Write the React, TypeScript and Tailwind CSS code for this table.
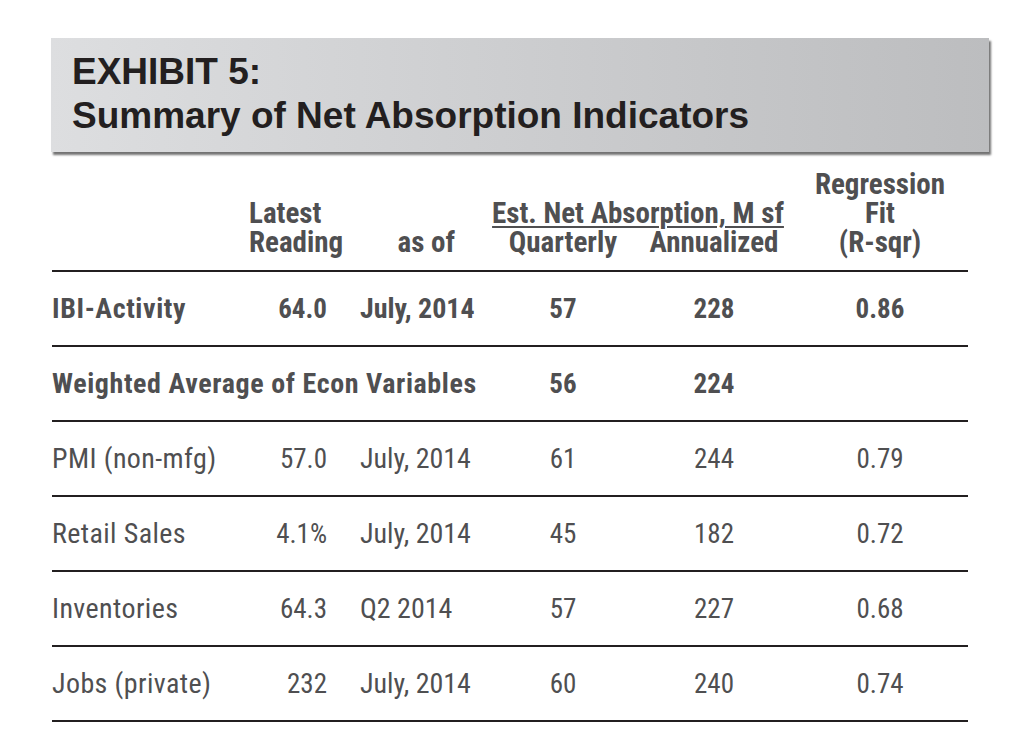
type Row = {
  label: string;
  reading?: string;
  asOf?: string;
  q: string;
  a: string;
  r?: string;
  bold?: boolean;
  span?: boolean;
};

const rows: Row[] = [
  { label: "IBI-Activity", reading: "64.0", asOf: "July, 2014", q: "57", a: "228", r: "0.86", bold: true },
  { label: "Weighted Average of Econ Variables", q: "56", a: "224", bold: true, span: true },
  { label: "PMI (non-mfg)", reading: "57.0", asOf: "July, 2014", q: "61", a: "244", r: "0.79" },
  { label: "Retail Sales", reading: "4.1%", asOf: "July, 2014", q: "45", a: "182", r: "0.72" },
  { label: "Inventories", reading: "64.3", asOf: "Q2 2014", q: "57", a: "227", r: "0.68" },
  { label: "Jobs (private)", reading: "232", asOf: "July, 2014", q: "60", a: "240", r: "0.74" },
];

const cols = "grid grid-cols-[197px_110px_131px_146px_156px_176px]";

export default function App() {
  return (
    <div className="min-h-[751px] w-[1025px] bg-white">
      <div className="pl-[51px] pt-[38px]">
        <div className="w-[938px] h-[114px] bg-gradient-to-r from-[#dddee0] to-[#bcbdbf] pl-[21px] pt-[12px] shadow-[2px_3px_2px_rgba(0,0,0,0.55)] font-['Liberation_Sans',sans-serif] font-bold text-[37px] leading-[44px] text-[#231f20]">
          <div>EXHIBIT 5:</div>
          <div>Summary of Net Absorption Indicators</div>
        </div>
      </div>

      <div className="ml-[52px] mt-[18px] w-[916px] font-['Roboto_Condensed','Open_Sans_Condensed',sans-serif] text-[#4f4f51]">
        <div className={`${cols} border-b-2 border-[#231f20] pb-[13px] font-bold text-[29px] leading-[29px]`}>
          <div />
          <div className="flex flex-col justify-end">
            <div>Latest</div>
            <div>Reading</div>
          </div>
          <div className="flex flex-col justify-end items-end pr-[35px]">
            <div>as of</div>
          </div>
          <div className="col-span-2 flex flex-col justify-end">
            <div className="text-center underline decoration-[1.5px] underline-offset-[3px] pr-[6px]">Est. Net Absorption, M sf</div>
            <div className="grid grid-cols-[146px_156px]">
              <div className="text-center">Quarterly</div>
              <div className="text-center">Annualized</div>
            </div>
          </div>
          <div className="flex flex-col justify-end items-center">
            <div>Regression</div>
            <div>Fit</div>
            <div>(R-sqr)</div>
          </div>
        </div>

        {rows.map((row) => (
          <div
            key={row.label}
            className={`${cols} h-[75px] items-center border-b-2 border-[#231f20] text-[27px] leading-[32px] ${row.bold ? "font-bold" : "font-normal"}`}
          >
            {row.span ? (
              <div className="col-span-3 whitespace-nowrap text-[28px] tracking-[0.6px]">{row.label}</div>
            ) : (
              <>
                <div className={`whitespace-nowrap text-[28px] ${row.bold ? "tracking-[0.6px]" : "tracking-[0.4px]"}`}>{row.label}</div>
                <div className="text-right pr-[32px]">{row.reading}</div>
                <div className="pl-[1px] whitespace-nowrap text-[28px]">{row.asOf}</div>
              </>
            )}
            <div className="text-center">{row.q}</div>
            <div className="text-center">{row.a}</div>
            <div className="text-center">{row.r ?? ""}</div>
          </div>
        ))}
      </div>
    </div>
  );
}
